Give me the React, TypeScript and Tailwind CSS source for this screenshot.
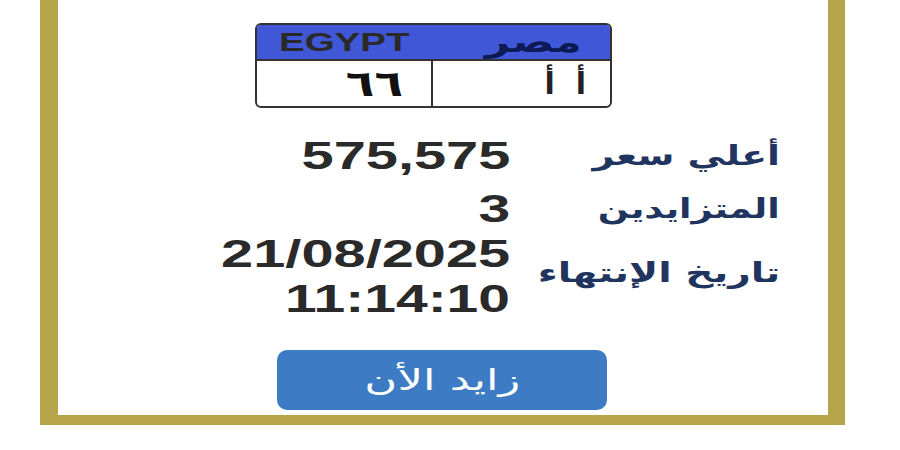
import React from "react";

const num = "font-['Liberation_Sans',Arial,sans-serif] font-bold text-[#2a2a2a]";
const ar = "font-['DejaVu_Sans','Noto_Sans',sans-serif]";

export default function App() {
  return (
    <div className="w-[900px] h-[450px] bg-white overflow-hidden">
      <div className="ml-[40px] w-[805px] h-[425px] border-l-[18px] border-r-[17px] border-b-[10px] border-[#b5a449] bg-white flex flex-col">
        {/* plate */}
        <div className="mt-[23px] ml-[197px] w-[357px] h-[85px] border-2 border-[#333] rounded-[6px] overflow-hidden flex flex-col">
          <div className="h-[36px] bg-[#4058d8] border-b-2 border-[#333] flex items-center justify-between pl-[22px] pr-[28px]">
            <span className={`${num} text-[#0d1a55] text-[26px] leading-none inline-block origin-left scale-x-[1.48]`}>EGYPT</span>
            <span dir="rtl" className={`${ar} font-bold text-[#0d1a55] text-[30px] leading-none inline-block origin-right scale-x-[1.45]`}>مصر</span>
          </div>
          <div className="flex-1 flex">
            <div className="w-[176px] border-r-2 border-[#333] flex items-center justify-end pr-[28px]">
              <span className={`${ar} font-bold text-[#111] text-[36px] leading-none inline-block origin-right scale-x-[1.3]`}>٦٦</span>
            </div>
            <div className="flex-1 flex items-center justify-end pr-[24px]">
              <span dir="rtl" className={`${ar} font-bold text-[#222] text-[30px] leading-none`}>أ&nbsp;&nbsp;أ</span>
            </div>
          </div>
        </div>

        {/* rows */}
        <div className="flex mt-[29px] h-[38px] items-center">
          <div className="w-[452px] text-right">
            <span className={`${num} text-[38px] leading-[38px] inline-block origin-right scale-x-[1.52]`}>575,575</span>
          </div>
          <div className="w-[270px] text-right" dir="rtl">
            <span className={`${ar} font-bold text-[#1f3560] text-[27px] leading-[38px] inline-block origin-right scale-x-[1.4]`}>أعلي سعر</span>
          </div>
        </div>
        <div className="flex mt-[15px] h-[38px] items-center">
          <div className="w-[452px] text-right">
            <span className={`${num} text-[38px] leading-[38px] inline-block origin-right scale-x-[1.5]`}>3</span>
          </div>
          <div className="w-[270px] text-right" dir="rtl">
            <span className={`${ar} font-bold text-[#1f3560] text-[27px] leading-[38px] inline-block origin-right scale-x-[1.35]`}>المتزايدين</span>
          </div>
        </div>
        <div className="flex mt-[7px] items-center">
          <div className="w-[452px] text-right flex flex-col items-end gap-[7px]">
            <span className={`${num} text-[38px] leading-[38px] inline-block origin-right scale-x-[1.52]`}>21/08/2025</span>
            <span className={`${num} text-[38px] leading-[38px] inline-block origin-right scale-x-[1.5]`}>11:14:10</span>
          </div>
          <div className="w-[270px] text-right pb-[8px]" dir="rtl">
            <span className={`${ar} font-bold text-[#1f3560] text-[27px] leading-[38px] inline-block origin-right scale-x-[1.45]`}>تاريخ الإنتهاء</span>
          </div>
        </div>

        {/* button */}
        <div className="mt-[32px] ml-[219px] w-[330px] h-[60px] rounded-[10px] bg-[#3d7cc4] flex items-center justify-center">
          <span dir="rtl" className={`${ar} text-white text-[29px] leading-none inline-block scale-x-[1.55]`}>زايد الأن</span>
        </div>
      </div>
    </div>
  );
}
